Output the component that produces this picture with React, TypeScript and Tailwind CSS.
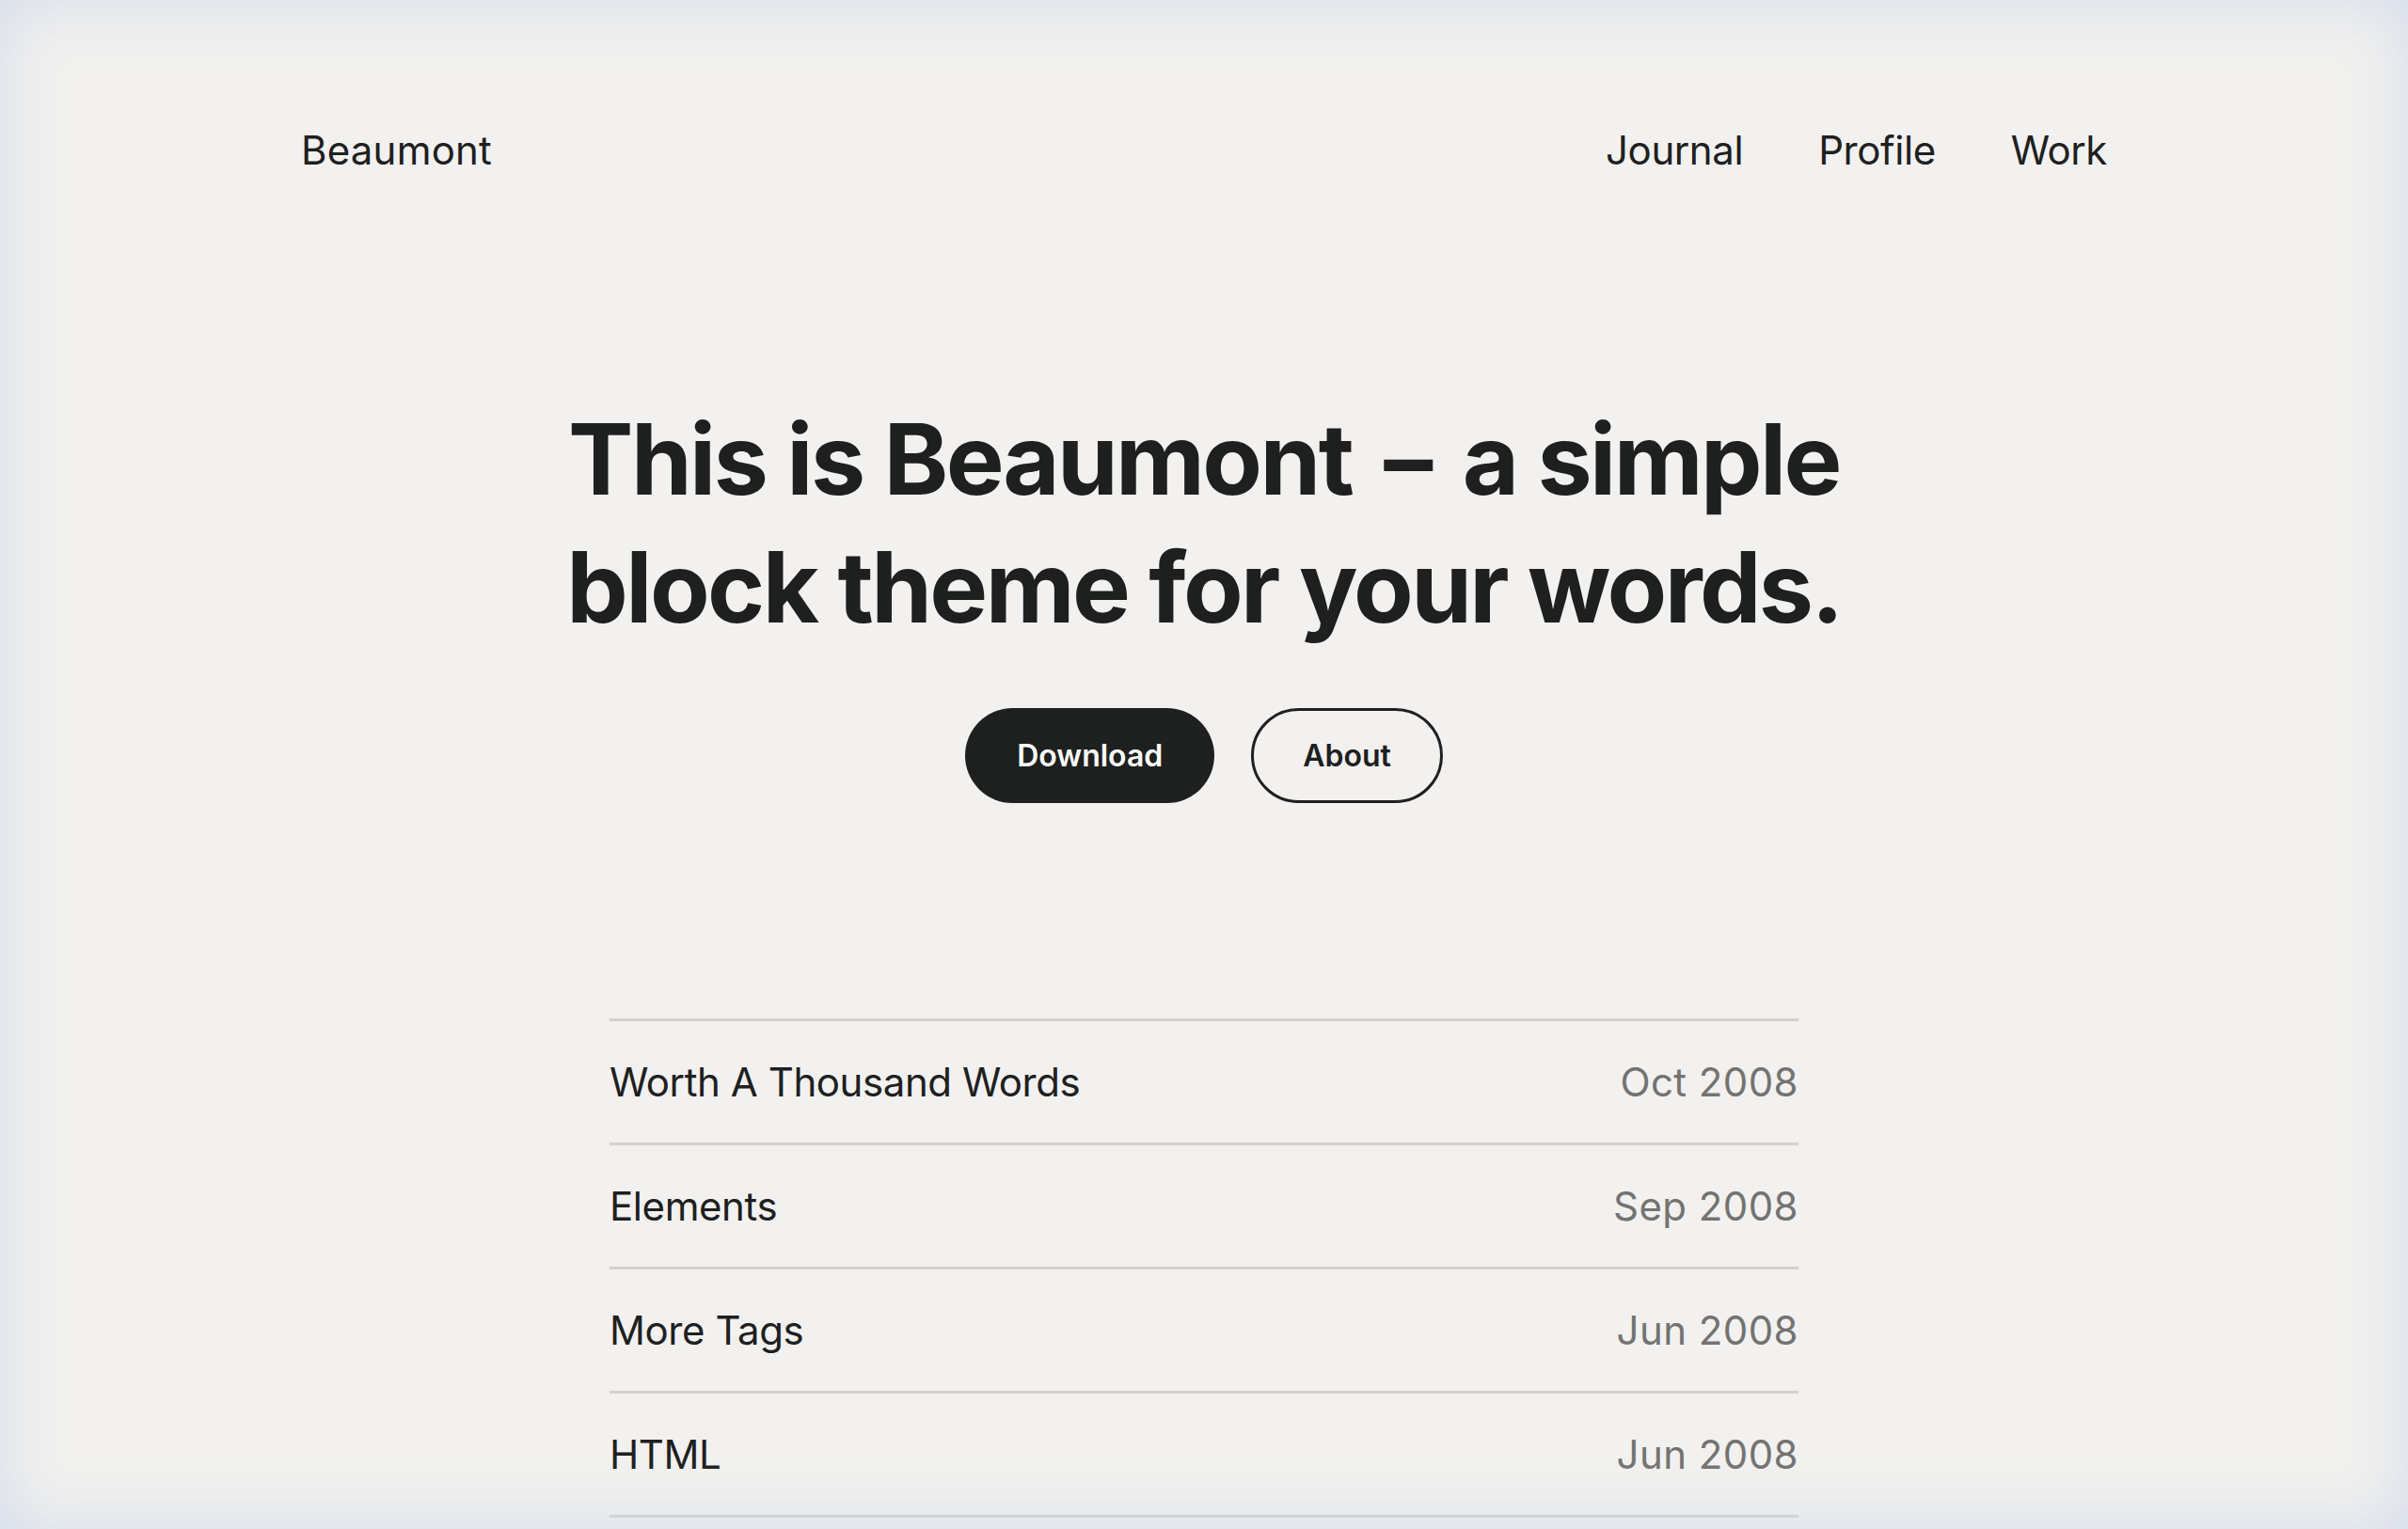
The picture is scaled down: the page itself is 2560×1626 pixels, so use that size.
const posts = [
  { title: 'Worth A Thousand Words', date: 'Oct 2008' },
  { title: 'Elements', date: 'Sep 2008' },
  { title: 'More Tags', date: 'Jun 2008' },
  { title: 'HTML', date: 'Jun 2008' },
];

export default function App() {
  return (
    <div className="relative h-screen overflow-hidden bg-[#f2f1ef] font-['Inter',sans-serif] text-[#1e201f]">
      {/* Header */}
      <header className="flex items-center justify-between px-[320px] pt-[134px]">
        <a className="text-[42px] leading-[52px] tracking-[0.005em]">Beaumont</a>
        <nav className="flex items-center gap-[80px] text-[42px] leading-[52px] tracking-[-0.01em]">
          <a>Journal</a>
          <a>Profile</a>
          <a>Work</a>
        </nav>
      </header>

      {/* Hero */}
      <main className="flex flex-col items-center">
        <h1 className="mt-[234px] text-center text-[104px] font-bold leading-[136px] tracking-[-0.025em]">
          This is Beaumont <span className="mx-[12px]">–</span> a simple
          <br />
          block theme for your words.
        </h1>

        <div className="mt-[61px] flex items-center gap-[39px]">
          <button className="h-[101px] rounded-full bg-[#1e201f] px-[55px] text-[32px] font-semibold text-white">
            Download
          </button>
          <button className="h-[101px] rounded-full border-[3px] border-[#1e201f] px-[52px] text-[32px] font-semibold">
            About
          </button>
        </div>

        {/* Posts */}
        <ul className="mt-[229px] w-[1264px] border-b-[3px] border-[#d2d1ce]">
          {posts.map((p) => (
            <li
              key={p.title}
              className="flex h-[132px] items-center justify-between border-t-[3px] border-[#d2d1ce] text-[42px]"
            >
              <span className="tracking-[-0.01em]">{p.title}</span>
              <span className="tracking-[0.01em] text-[#737371]">{p.date}</span>
            </li>
          ))}
        </ul>
      </main>

      {/* soft frame around the screenshot */}
      <div className="pointer-events-none absolute inset-0 shadow-[inset_0_0_70px_rgba(210,218,235,0.95)]" />
    </div>
  );
}
